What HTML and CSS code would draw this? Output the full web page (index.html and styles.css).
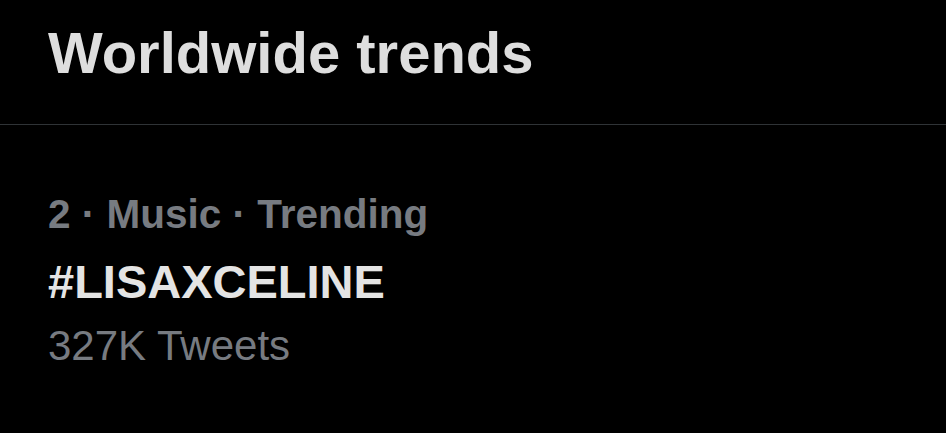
FILE: index.html
```html
<!DOCTYPE html>
<html>
<head>
<meta charset="utf-8">
<link rel="stylesheet" href="styles.css">
</head>
<body>
  <header class="header">
    <h1 class="title">Worldwide trends</h1>
  </header>
  <section class="trend">
    <div class="meta">2 · Music · Trending</div>
    <div class="tag">#LISAXCELINE</div>
    <div class="count">327K Tweets</div>
  </section>
</body>
</html>
```
FILE: styles.css
```css
html, body {
  margin: 0;
  padding: 0;
  background: #000;
  width: 946px;
  height: 433px;
  overflow: hidden;
  font-family: "Liberation Sans", Arial, sans-serif;
}
.header {
  padding: 18px 0 36px 48px;
  border-bottom: 1px solid #2f3336;
}
.title {
  margin: 0;
  font-size: 58px;
  line-height: 70px;
  font-weight: 700;
  color: #dedede;
}
.trend {
  padding: 59px 0 0 48px;
}
.meta {
  font-size: 40.5px;
  line-height: 60px;
  font-weight: 700;
  color: #777b81;
}
.tag {
  font-size: 47px;
  line-height: 76px;
  font-weight: 700;
  color: #e4e4e4;
}
.count {
  font-size: 42px;
  line-height: 52px;
  font-weight: 400;
  color: #777b81;
}
```
